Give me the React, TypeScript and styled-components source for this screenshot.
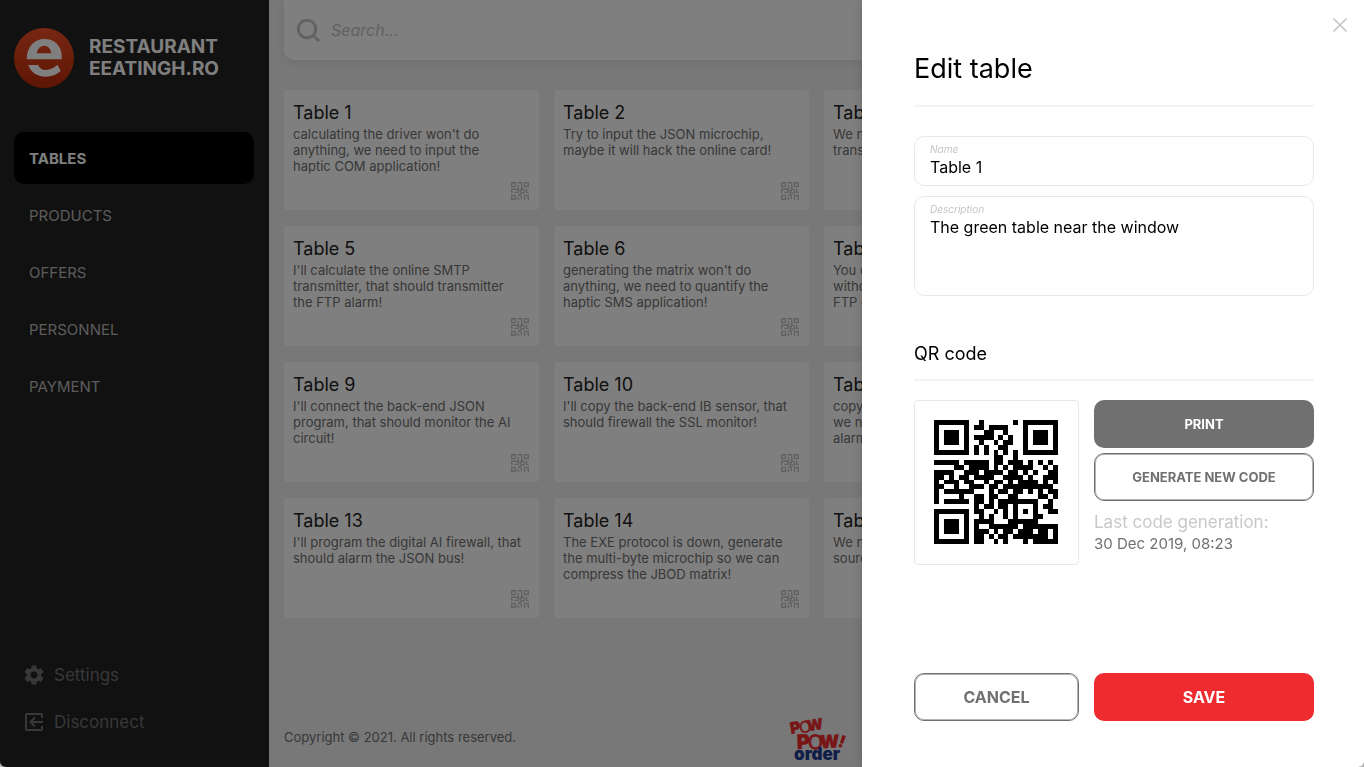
import React, { useState } from "react";
import styled, { createGlobalStyle, css } from "styled-components";
import { MdSettings } from "react-icons/md";

const GlobalStyle = createGlobalStyle`
  *, *::before, *::after { box-sizing: border-box; }
  body {
    margin: 0;
    background: #b4b4b4;
    font-family: Inter, "Liberation Sans", sans-serif;
    color: #000;
  }
  h1, h2, h3, p { margin: 0; font-weight: 400; }
  button, input, textarea { font-family: inherit; }
`;

const Shell = styled.div`
  display: flex;
  min-height: 100vh;
  background: #f0f0f0;
  border-radius: 0 0 6px 6px;
  overflow: hidden;
`;

const Sidebar = styled.aside`
  width: 269px;
  flex: none;
  display: flex;
  flex-direction: column;
  padding: 28px 15px 22px 14px;
  background: #222;
`;

const Brand = styled.div`
  display: flex;
  align-items: center;
  gap: 15px;
  margin-bottom: 44px;
`;

const BrandName = styled.p`
  font-size: 19px;
  line-height: 22px;
  font-weight: 700;
  color: #fff;
`;

const Nav = styled.nav`
  display: flex;
  flex-direction: column;
  gap: 5px;
`;

const NavLink = styled.a<{ $active?: boolean }>`
  display: flex;
  align-items: center;
  height: 52px;
  padding: 0 15px;
  border-radius: 10px;
  font-size: 15px;
  text-decoration: none;
  color: #b8b8b8;
  ${(p) => p.$active && css`
    background: #000;
    color: #fff;
    font-weight: 700;
  `}
`;

const SideActions = styled.div`
  display: flex;
  flex-direction: column;
  align-items: flex-start;
  gap: 1px;
  margin-top: auto;
`;

const SideAction = styled.button`
  display: flex;
  align-items: center;
  gap: 8px;
  height: 46px;
  padding: 0 8px;
  border: 0;
  background: none;
  color: #707070;
  font-size: 17px;
`;

const Main = styled.main`
  flex: 1;
  min-width: 0;
  display: flex;
  flex-direction: column;
  padding: 0 15px;
`;

const SearchBar = styled.label`
  display: flex;
  align-items: center;
  gap: 10px;
  height: 60px;
  padding: 0 12px;
  background: #fff;
  border-radius: 0 0 10px 10px;
  box-shadow: 0 2px 10px rgba(0, 0, 0, 0.08);
  color: #c4c4c4;
`;

const SearchInput = styled.input`
  flex: 1;
  min-width: 0;
  border: 0;
  padding: 0;
  background: none;
  font-size: 16px;
  font-style: italic;
  &::placeholder { color: #c4c4c4; opacity: 1; }
`;

const CardGrid = styled.div`
  display: grid;
  grid-template-columns: repeat(4, 1fr);
  gap: 16px 15px;
  margin-top: 30px;
`;

const Card = styled.article<{ $column: number }>`
  grid-column: ${(p) => p.$column};
  display: flex;
  flex-direction: column;
  height: 120px;
  padding: 11px 10px 10px 9px;
  border-radius: 4px;
  background: #fff;
`;

const CardTitle = styled.h3`
  font-size: 18px;
  line-height: 24px;
  color: #222;
`;

const CardText = styled.p`
  margin-top: 1px;
  font-size: 13px;
  line-height: 16px;
  white-space: pre-line;
  color: #707070;
`;

const CardIcon = styled.span`
  display: flex;
  margin: auto 0 0 auto;
  color: #c4c4c4;
`;

const Footer = styled.footer`
  display: grid;
  grid-template-columns: 1fr auto 1fr;
  align-items: center;
  margin-top: auto;
  padding: 0 0 4px;
`;

const Copyright = styled.p`
  padding-bottom: 6px;
  font-size: 13px;
  color: #707070;
`;

const Overlay = styled.div`
  position: fixed;
  inset: 0;
  display: flex;
  justify-content: flex-end;
  background: rgba(0, 0, 0, 0.5);
  border-radius: 0 0 6px 6px;
  overflow: hidden;
`;

const Drawer = styled.form`
  position: relative;
  display: flex;
  flex-direction: column;
  width: 502px;
  padding: 50px 50px 46px 52px;
  background: #fff;
  box-shadow: 0 0 10px rgba(0, 0, 0, 0.16);
`;

const CloseButton = styled.button`
  position: absolute;
  top: 15px;
  right: 14px;
  display: flex;
  padding: 0;
  border: 0;
  background: none;
  color: #c4c4c4;
`;

const DrawerTitle = styled.h1`
  padding-bottom: 17px;
  border-bottom: 2px solid #f4f4f4;
  font-size: 27px;
  line-height: 38px;
`;

const SectionTitle = styled.h2`
  margin-top: 44px;
  padding-bottom: 11px;
  border-bottom: 2px solid #f4f4f4;
  font-size: 18px;
  line-height: 28px;
`;

const Fields = styled.div`
  display: flex;
  flex-direction: column;
  gap: 10px;
  margin-top: 29px;
`;

const Field = styled.label<{ $tall?: boolean }>`
  display: flex;
  flex-direction: column;
  height: ${(p) => (p.$tall ? 100 : 50)}px;
  padding: 5px 15px;
  border: 1px solid #e8e8e8;
  border-radius: 10px;
`;

const FieldName = styled.span`
  font-size: 10px;
  line-height: 14px;
  font-style: italic;
  color: #c4c4c4;
`;

const fieldText = css`
  width: 100%;
  padding: 0;
  border: 0;
  outline: 0;
  background: none;
  color: #000;
  font-size: 16px;
  line-height: 22px;
`;

const TextInput = styled.input`
  ${fieldText}
  height: 22px;
`;

const TextArea = styled.textarea`
  ${fieldText}
  flex: 1;
  resize: none;
`;

const Columns = styled.div`
  display: grid;
  grid-template-columns: 165px 1fr;
  gap: 15px;
`;

const CodeSection = styled(Columns)`
  margin-top: 19px;
`;

const Actions = styled(Columns)`
  margin-top: auto;
`;

const CodeFrame = styled.div`
  height: 165px;
  padding: 19px;
  border: 1px solid #e8e8e8;
  border-radius: 4px;
`;

const CodeTools = styled.div`
  display: flex;
  flex-direction: column;
  gap: 5px;
`;

const Button = styled.button<{ $kind: "solid" | "outline" | "primary"; $small?: boolean }>`
  height: 48px;
  padding: 0 12px;
  border-radius: 10px;
  font-size: ${(p) => (p.$small ? 13 : 16)}px;
  font-weight: 700;
  ${(p) => p.$kind === "solid" && css`
    border: 0;
    background: #707070;
    color: #fff;
  `}
  ${(p) => p.$kind === "outline" && css`
    border: 1px solid #707070;
    box-shadow: inset 0 0 0 1px #b4b4b4;
    background: #fff;
    color: #707070;
  `}
  ${(p) => p.$kind === "primary" && css`
    border: 0;
    background: #ee2b2f;
    color: #fff;
  `}
`;

const Generated = styled.p`
  margin-top: 6px;
  font-size: 15px;
  line-height: 21px;
  color: #707070;
`;

const Muted = styled.span`
  display: block;
  font-size: 17px;
  color: #c8c8c8;
`;

const LogoMark = () => (
  <svg width="60" height="60" viewBox="0 0 60 60" aria-hidden="true">
    <defs>
      <linearGradient id="brand" x1="0" y1="0" x2="0" y2="1">
        <stop offset="0" stopColor="#f04f28" />
        <stop offset="1" stopColor="#bc2a08" />
      </linearGradient>
    </defs>
    <circle cx="30" cy="30" r="30" fill="url(#brand)" />
    <path
      fill="#fff"
      fillRule="evenodd"
      d="M12.7 31.3C12.7 19 20 11 30.5 11C41 11 47.7 18.5 47.7 28V31.3ZM22.6 25.3H37.4C36.4 20.5 34 17.7 30.2 17.7C26.4 17.7 23.8 20.5 22.6 25.3Z"
    />
    <path
      fill="#fff"
      d="M14.3 37H24.3C25.5 40.5 28 42 31.5 42C36 42 40 40 43.5 36.8L46.7 43C42.5 47 37.5 48.7 31.5 48.7C23 48.7 16.5 44 14.3 37Z"
    />
  </svg>
);

const SearchIcon = () => (
  <svg width="25" height="25" viewBox="0 0 25 25" fill="none" stroke="currentColor" strokeWidth="3" aria-hidden="true">
    <circle cx="11" cy="11" r="8.8" />
    <path d="M17.2 17.2L23 23" />
  </svg>
);

const LeaveIcon = () => (
  <svg width="24" height="24" viewBox="0 0 24 24" fill="none" stroke="currentColor" strokeWidth="2" aria-hidden="true">
    <path d="M20 8V5Q20 4 19 4H5Q4 4 4 5V19Q4 20 5 20H19Q20 20 20 19V16" />
    <path d="M21 12H9M13 7.5L8.5 12L13 16.5" />
  </svg>
);

const CloseIcon = () => (
  <svg width="20" height="20" viewBox="0 0 20 20" fill="none" stroke="currentColor" strokeWidth="1.6" aria-hidden="true">
    <path d="M3.5 3.5L16.5 16.5M16.5 3.5L3.5 16.5" />
  </svg>
);

const SmallCode = () => (
  <svg width="18" height="18" viewBox="0 0 18 18" fill="none" stroke="currentColor" strokeWidth="1.4" aria-hidden="true">
    <path d="M.7 .7H4.5V4.5H.7ZM13.5 .7H17.3V4.5H13.5ZM.7 13.5H4.5V17.3H.7Z" />
    <path d="M6.7 .7H10.7V6.9M7.4 3V7.2H.7V11.2M3 10.4H7.2V8.6H9.6M12.8 7.2H10.2V11H13.4V7.2M15.6 6.6V10.4H18M6.8 13H9.4V10.8M7.4 15V18M10.2 13V17.3M13.5 18V13.5H17.3V18" />
  </svg>
);

const PowLogo = () => (
  <svg width="58" height="46" viewBox="0 0 58 46" overflow="visible" role="img" aria-label="Pow Pow order" fontFamily="Inter, sans-serif" fontWeight="900">
    <g fill="#ee2b2f" stroke="#ee2b2f">
      <g transform="translate(3 17) rotate(-9)" fontSize="16" strokeWidth="0.4">
        <text x="0" y="0">P</text>
        <text x="9" y="1" fontWeight="400">O</text>
        <text x="17" y="0" fontSize="15">W</text>
      </g>
      <g transform="translate(9 32) rotate(-2)" fontSize="20" strokeWidth="0.4">
        <text x="0" y="0">P</text>
        <text x="11" y="1" fontWeight="400" strokeWidth="0.8">O</text>
        <text x="23" y="0" fontSize="18">W</text>
      </g>
      <text fontSize="17" strokeWidth="0" transform="translate(49 29) rotate(20)">!</text>
    </g>
    <text x="6" y="43" fontSize="17" fill="#1f3a93">order</text>
  </svg>
);

const QR_ROWS = [
  "1111111001000000101111111",
  "1000001011011110001000001",
  "1011101000110010001011101",
  "1011101011110101001011101",
  "1011101001001011001011101",
  "1000001010100110001000001",
  "1111111010101010101111111",
  "0000000000001100100000000",
  "1111101111101101110101010",
  "0000110111101010111100101",
  "1111001110111101101010011",
  "1101011011110011110100111",
  "1011101100101101011110101",
  "1100100111011011111111110",
  "1011111100010110110101011",
  "1000010011011001100001101",
  "1011111011010111111110010",
  "0000000010110110100010110",
  "1111111011001010101010011",
  "1000001001010010100011000",
  "1011101011110001111110000",
  "1011101010011111101111111",
  "1011101011101011011101101",
  "1000001011010110111111101",
  "1111111011001010001011111",
];

const QrCode = () => (
  <svg width="124" height="124" viewBox="0 0 25 25" shapeRendering="crispEdges" role="img" aria-label="QR code">
    <path
      d={QR_ROWS.map((row, y) =>
        Array.from(row, (cell, x) => (cell === "1" ? `M${x} ${y}h1v1h-1z` : "")).join("")
      ).join("")}
    />
  </svg>
);

const TABLES = [
  { id: 1, text: "calculating the driver won't do\nanything, we need to input the\nhaptic COM application!" },
  { id: 2, text: "Try to input the JSON microchip,\nmaybe it will hack the online card!" },
  { id: 3, text: "We need to add\ntransistors!" },
  { id: 5, text: "I'll calculate the online SMTP\ntransmitter, that should transmitter\nthe FTP alarm!" },
  { id: 6, text: "generating the matrix won't do\nanything, we need to quantify the\nhaptic SMS application!" },
  { id: 7, text: "You can't compress the program\nwithout hacking the redundant\nFTP circuit!" },
  { id: 9, text: "I'll connect the back-end JSON\nprogram, that should monitor the AI\ncircuit!" },
  { id: 10, text: "I'll copy the back-end IB sensor, that\nshould firewall the SSL monitor!" },
  { id: 11, text: "copying the feed won't do a thing,\nwe need to reboot the wireless\nalarm!" },
  { id: 13, text: "I'll program the digital AI firewall, that\nshould alarm the JSON bus!" },
  { id: 14, text: "The EXE protocol is down, generate\nthe multi-byte microchip so we can\ncompress the JBOD matrix!" },
  { id: 15, text: "We need to navigate the open\nsource SQL bandwidth!" },
];

const NAV = ["TABLES", "PRODUCTS", "OFFERS", "PERSONNEL", "PAYMENT"];

export default function App() {
  const [name, setName] = useState("Table 1");
  const [description, setDescription] = useState("The green table near the window");

  return (
    <>
      <GlobalStyle />
      <Shell>
        <Sidebar>
          <Brand>
            <LogoMark />
            <BrandName>RESTAURANT<br />EEATINGH.RO</BrandName>
          </Brand>
          <Nav>
            {NAV.map((item, i) => (
              <NavLink key={item} href="#" $active={i === 0}>{item}</NavLink>
            ))}
          </Nav>
          <SideActions>
            <SideAction type="button"><MdSettings size={24} />Settings</SideAction>
            <SideAction type="button"><LeaveIcon />Disconnect</SideAction>
          </SideActions>
        </Sidebar>
        <Main>
          <SearchBar>
            <SearchIcon />
            <SearchInput type="search" placeholder="Search..." aria-label="Search" />
          </SearchBar>
          <CardGrid>
            {TABLES.map(({ id, text }) => (
              <Card key={id} $column={((id - 1) % 4) + 1}>
                <CardTitle>Table {id}</CardTitle>
                <CardText>{text}</CardText>
                <CardIcon><SmallCode /></CardIcon>
              </Card>
            ))}
          </CardGrid>
          <Footer>
            <Copyright>Copyright © 2021. All rights reserved.</Copyright>
            <PowLogo />
          </Footer>
        </Main>
      </Shell>
      <Overlay>
        <Drawer onSubmit={(e) => e.preventDefault()}>
          <CloseButton type="button" aria-label="Close"><CloseIcon /></CloseButton>
          <DrawerTitle>Edit table</DrawerTitle>
          <Fields>
            <Field>
              <FieldName>Name</FieldName>
              <TextInput value={name} onChange={(e) => setName(e.target.value)} />
            </Field>
            <Field $tall>
              <FieldName>Description</FieldName>
              <TextArea value={description} onChange={(e) => setDescription(e.target.value)} />
            </Field>
          </Fields>
          <SectionTitle>QR code</SectionTitle>
          <CodeSection>
            <CodeFrame><QrCode /></CodeFrame>
            <CodeTools>
              <Button type="button" $kind="solid" $small>PRINT</Button>
              <Button type="button" $kind="outline" $small>GENERATE NEW CODE</Button>
              <Generated><Muted>Last code generation:</Muted>30 Dec 2019, 08:23</Generated>
            </CodeTools>
          </CodeSection>
          <Actions>
            <Button type="button" $kind="outline">CANCEL</Button>
            <Button type="submit" $kind="primary">SAVE</Button>
          </Actions>
        </Drawer>
      </Overlay>
    </>
  );
}
